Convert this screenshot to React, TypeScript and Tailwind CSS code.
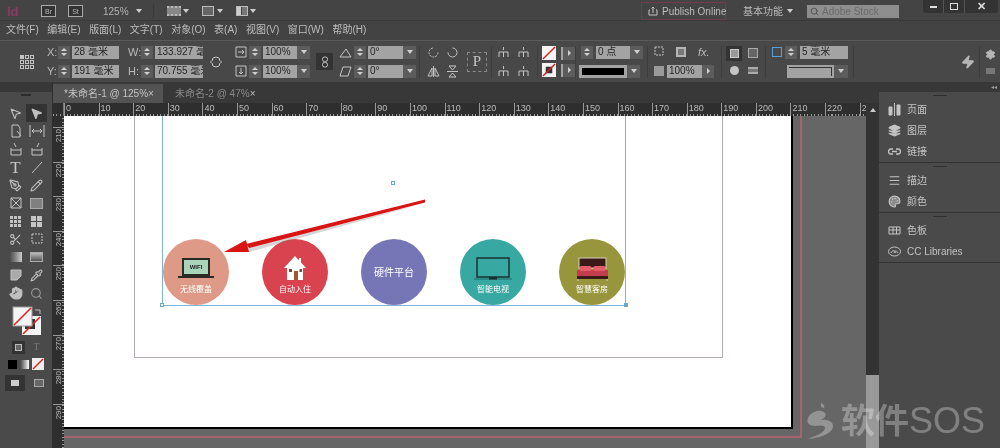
import type { ReactNode } from "react";
import { Hand, Layers, Menu, MousePointer2, Palette, Pencil, PenTool, Pipette, Scissors, Search, Settings, Zap } from "lucide-react";

const FONT = "[font-family:'Liberation_Sans','Noto_Sans_CJK_SC',sans-serif]";
const MENUS = ["文件(F)", "编辑(E)", "版面(L)", "文字(T)", "对象(O)", "表(A)", "视图(V)", "窗口(W)", "帮助(H)"];
const RULER_TOP = Array.from({ length: 24 }, (_, i) => i * 10);
const RULER_LEFT = [210, 220, 230, 240, 250, 260, 270, 280, 290];

function Svg({ w = 14, h = 14, box = "0 0 14 14", children }: { w?: number; h?: number; box?: string; children: ReactNode }) {
  return (
    <svg width={w} height={h} viewBox={box} fill="none" stroke="#c4c4c4" strokeWidth="1" className="shrink-0">
      {children}
    </svg>
  );
}

function Caret({ color = "#cfcfcf" }: { color?: string }) {
  return <span className="block h-0 w-0 shrink-0 border-x-[3px] border-t-[4px] border-x-transparent" style={{ borderTopColor: color }} />;
}

function Spin() {
  return (
    <div className="flex h-[13px] w-[12px] shrink-0 flex-col items-center justify-center gap-[2px] bg-[#5c5c5c]">
      <span className="h-0 w-0 border-x-[3px] border-b-[3px] border-x-transparent border-b-[#d0d0d0]" />
      <span className="h-0 w-0 border-x-[3px] border-t-[3px] border-x-transparent border-t-[#d0d0d0]" />
    </div>
  );
}

function Field({ value, w, drop, arrow }: { value: string; w: number; drop?: boolean; arrow?: boolean }) {
  return (
    <div className="flex h-[13px] shrink-0">
      <div className="flex items-center overflow-hidden whitespace-nowrap bg-[#a3a3a3] pl-[2px] text-[10px] leading-none text-[#262626]" style={{ width: w }}>
        {value}
      </div>
      {drop && (
        <div className="flex w-[13px] items-center justify-center bg-[#5c5c5c]">
          <Caret />
        </div>
      )}
      {arrow && (
        <div className="flex w-[12px] items-center justify-center bg-[#5c5c5c]">
          <span className="h-0 w-0 border-y-[3px] border-l-[3px] border-y-transparent border-l-[#d0d0d0]" />
        </div>
      )}
    </div>
  );
}

function Row({ children, gap = 2 }: { children: ReactNode; gap?: number }) {
  return (
    <div className="flex h-[13px] items-center" style={{ gap }}>
      {children}
    </div>
  );
}

function Section({ w, children, line = true }: { w: number; children: ReactNode; line?: boolean }) {
  return (
    <div className={`flex h-[32px] shrink-0 flex-col justify-between ${line ? "border-r border-[#3d3d3d]" : ""}`} style={{ width: w }}>
      {children}
    </div>
  );
}

function StrokeSwatch({ dark }: { dark?: boolean }) {
  return (
    <svg width="14" height="14" viewBox="0 0 15 15" className="shrink-0">
      <rect width="15" height="15" fill="#f4f4f4" />
      {dark && <rect x="4" y="4" width="7" height="7" fill="#333" />}
      <path d="M1 14 14 1" stroke="#d22" strokeWidth="1.6" />
    </svg>
  );
}

function ControlPanel() {
  return (
    <div className="flex h-[42px] shrink-0 items-center border-t border-[#5a5a5a] bg-[#484848] text-[11px] text-[#b9b9b9]">
      <div className="flex w-[47px] shrink-0 justify-end pr-[13px]">
        <div className="grid grid-cols-3 gap-[1px]">
          {Array.from({ length: 9 }, (_, i) => (
            <span key={i} className={`h-[4px] w-[4px] border border-[#c4c4c4] ${i === 0 ? "bg-[#c4c4c4]" : ""}`} />
          ))}
        </div>
      </div>
      <Section w={78} line={false}>
        <Row>
          <span className="w-[9px]">X:</span>
          <Spin />
          <Field value="28 毫米" w={47} />
        </Row>
        <Row>
          <span className="w-[9px]">Y:</span>
          <Spin />
          <Field value="191 毫米" w={47} />
        </Row>
      </Section>
      <Section w={79} line={false}>
        <Row>
          <span className="ml-[3px] w-[11px]">W:</span>
          <Spin />
          <Field value="133.927 毫米" w={48} />
        </Row>
        <Row>
          <span className="ml-[3px] w-[11px]">H:</span>
          <Spin />
          <Field value="70.755 毫米" w={48} />
        </Row>
      </Section>
      <div className="mr-[7px] flex w-[24px] shrink-0 justify-center">
        <Svg>
          <path d="M3 6a4 4 0 0 1 8 0M3 8a4 4 0 0 0 8 0M1 7h2M11 7h2" />
        </Svg>
      </div>
      <Section w={81} line={false}>
        <Row>
          <Svg w={12} h={12} box="0 0 12 12">
            <path d="M1 1h10v10H1zM3 6h6M7 4l2 2-2 2" />
          </Svg>
          <Spin />
          <Field value="100%" w={34} drop />
        </Row>
        <Row>
          <Svg w={12} h={12} box="0 0 12 12">
            <path d="M1 1h10v10H1zM6 3v6M4 7l2 2 2-2" />
          </Svg>
          <Spin />
          <Field value="100%" w={34} drop />
        </Row>
      </Section>
      <div className="mr-[6px] flex h-[17px] w-[17px] shrink-0 items-center justify-center bg-[#333]">
        <Svg w={8} h={12} box="0 0 8 12">
          <rect x="1.5" y="1" width="5" height="4.5" rx="2" />
          <rect x="1.5" y="6.5" width="5" height="4.5" rx="2" />
        </Svg>
      </div>
      <Section w={81}>
        <Row>
          <Svg w={13} h={13} box="0 0 13 13">
            <path d="M1 11h11L7 3z" />
          </Svg>
          <Spin />
          <Field value="0°" w={35} drop />
        </Row>
        <Row>
          <Svg w={13} h={13} box="0 0 13 13">
            <path d="M1 11h8l3-9H4z" />
          </Svg>
          <Spin />
          <Field value="0°" w={35} drop />
        </Row>
      </Section>
      <div className="flex h-[32px] w-[72px] shrink-0 items-center gap-[8px] border-r border-[#3d3d3d] pl-[7px]">
        <div className="grid grid-cols-2 gap-x-[6px] gap-y-[6px]">
          <Svg w={13} h={13} box="0 0 13 13">
            <path d="M11 6.5A4.5 4.5 0 1 1 6.5 2" strokeDasharray="2 1" />
          </Svg>
          <Svg w={13} h={13} box="0 0 13 13">
            <path d="M2 6.5A4.5 4.5 0 1 0 6.5 2" />
          </Svg>
          <Svg w={13} h={13} box="0 0 13 13">
            <path d="M6.5 1v11M5 3 1 11h4zM8 3l4 8H8z" />
          </Svg>
          <Svg w={13} h={13} box="0 0 13 13">
            <path d="M1 6.5h11M3 1h7L6.5 5zM3 12h7L6.5 8z" />
          </Svg>
        </div>
        <div className="flex h-[20px] w-[20px] items-center justify-center border border-dashed border-[#8a8a8a] font-['Liberation_Serif',serif] text-[15px] leading-none text-[#c4c4c4]">
          P
        </div>
      </div>
      <div className="grid h-[32px] w-[46px] shrink-0 grid-cols-[20px_20px] content-center gap-y-[6px] border-r border-[#3d3d3d] pl-[5px]">
        {[0, 1, 2, 3].map((k) => (
          <Svg key={k} w={13} h={13} box="0 0 13 13">
            <path d="M6.5 1v3M2 11V6h9v5M6.5 6v5" />
          </Svg>
        ))}
      </div>
      <Section w={38}>
        <div className="flex h-[15px] items-center gap-[5px] pl-[4px]">
          <StrokeSwatch />
          <Field value="" w={0} arrow />
        </div>
        <div className="flex h-[15px] items-center gap-[5px] pl-[4px]">
          <StrokeSwatch dark />
          <Field value="" w={0} arrow />
        </div>
      </Section>
      <Section w={72}>
        <Row gap={3}>
          <span className="w-[2px]" />
          <Spin />
          <Field value="0 点" w={34} drop />
        </Row>
        <div className="ml-[3px] flex h-[13px] w-[61px]">
          <div className="flex flex-1 items-center bg-[#a3a3a3] px-[3px]">
            <span className="h-[7px] w-full bg-black" />
          </div>
          <div className="flex w-[13px] items-center justify-center bg-[#5c5c5c]">
            <Caret />
          </div>
        </div>
      </Section>
      <Section w={74}>
        <div className="flex h-[13px] items-center gap-[10px] pl-[6px]">
          <Svg w={12} h={12} box="0 0 12 12">
            <path d="M1 1h8v8H1z" strokeDasharray="2 1" />
          </Svg>
          <span className="h-[10px] w-[10px] border-2 border-[#b5b5b5] bg-[#777]" />
          <span className="ml-[2px] text-[11px] italic leading-none">fx.</span>
        </div>
        <div className="flex items-center gap-[3px] pl-[6px]">
          <span className="h-[10px] w-[10px] bg-[#9a9a9a]" />
          <Field value="100%" w={35} arrow />
        </div>
      </Section>
      <div className="grid h-[32px] w-[44px] shrink-0 grid-cols-[19px_19px] content-center items-center gap-y-[2px] border-r border-[#3d3d3d] pl-[4px]">
        <span className="flex h-[15px] w-[16px] items-center justify-center bg-[#333]">
          <span className="h-[9px] w-[9px] border border-[#ccc] bg-[#999]" />
        </span>
        <span className="flex h-[15px] w-[16px] items-center justify-center">
          <span className="h-[10px] w-[10px] border border-[#aaa] bg-[#666] p-[2px]" />
        </span>
        <span className="flex h-[15px] w-[16px] items-center justify-center">
          <span className="h-[9px] w-[9px] rounded-full bg-[#c4c4c4]" />
        </span>
        <span className="flex h-[15px] w-[16px] items-center justify-center">
          <span className="h-[7px] w-[10px] border-y-2 border-[#aaa] bg-[#777]" />
        </span>
      </div>
      <Section w={88}>
        <Row gap={3}>
          <span className="ml-[6px] h-[10px] w-[10px] border border-[#5aa0d8]" />
          <Spin />
          <Field value="5 毫米" w={48} />
        </Row>
        <div className="ml-[21px] flex h-[13px]">
          <div className="flex w-[47px] items-center bg-[#a3a3a3] px-[2px]">
            <span className="h-[9px] w-full border-t border-r border-[#333]" />
          </div>
          <div className="flex w-[14px] items-center justify-center bg-[#5c5c5c]">
            <Caret />
          </div>
        </div>
      </Section>
      <div className="flex flex-1 justify-end pr-[4px]">
        <Zap size={14} color="#b5b5b5" fill="#b5b5b5" />
      </div>
      <div className="flex h-[32px] w-[21px] shrink-0 flex-col items-center justify-around border-l border-[#3d3d3d]">
        <Settings size={11} color="#b5b5b5" fill="#b5b5b5" />
        <span className="h-[6px] w-[9px] bg-[#777]" />
      </div>
    </div>
  );
}

function ToolPair({ children, on }: { children: ReactNode; on?: boolean }) {
  return (
    <div className={`flex h-[18px] items-center justify-center ${on ? "bg-[#333]" : ""}`}>
      {children}
    </div>
  );
}

function ToolPanel() {
  const c = "#c0c0c0";
  return (
    <aside className="flex w-[53px] shrink-0 flex-col border-r border-[#2e2e2e] bg-[#4a4a4a]">
      <div className="flex h-[10px] items-center justify-center bg-[#383838] text-[7px] leading-none text-[#999]" />
      <div className="mx-auto mt-[2px] h-[2px] w-[10px] bg-[#2d2d2d]" />
      <div className="mt-[8px] grid grid-cols-2 px-[5px]">
        <ToolPair>
          <MousePointer2 size={13} color={c} />
        </ToolPair>
        <ToolPair on>
          <MousePointer2 size={13} color={c} fill={c} />
        </ToolPair>
        <ToolPair>
          <Svg>
            <path d="M3 1h6l2 3v9H3zM8 7l4 5" />
          </Svg>
        </ToolPair>
        <ToolPair>
          <Svg w={16} h={12} box="0 0 16 12">
            <path d="M1 0v12M15 0v12M3 6h10M5 4 3 6l2 2M11 4l2 2-2 2" />
          </Svg>
        </ToolPair>
        <ToolPair>
          <Svg>
            <path d="M2 6v7h10V6M2 8h10M5 1l2 4" />
          </Svg>
        </ToolPair>
        <ToolPair>
          <Svg>
            <path d="M2 6v7h10V6M2 8h10M9 1 7 5" />
          </Svg>
        </ToolPair>
        <ToolPair>
          <span className="font-['Liberation_Serif',serif] text-[17px] leading-none text-[#c8c8c8]">T</span>
        </ToolPair>
        <ToolPair>
          <Svg>
            <path d="m2 13 10-11" />
          </Svg>
        </ToolPair>
        <ToolPair>
          <PenTool size={13} color={c} />
        </ToolPair>
        <ToolPair>
          <Pencil size={13} color={c} />
        </ToolPair>
        <ToolPair>
          <Svg>
            <path d="M2 2h10v10H2zM2 2l10 10M12 2 2 12" />
          </Svg>
        </ToolPair>
        <ToolPair>
          <span className="h-[11px] w-[13px] border border-[#aaa] bg-[#808080]" />
        </ToolPair>
        <ToolPair>
          <div className="grid grid-cols-3 gap-[1px]">
            {Array.from({ length: 9 }, (_, i) => (
              <span key={i} className="h-[3px] w-[3px] bg-[#c4c4c4]" />
            ))}
          </div>
        </ToolPair>
        <ToolPair>
          <div className="grid grid-cols-2 gap-[1px]">
            {Array.from({ length: 4 }, (_, i) => (
              <span key={i} className="h-[5px] w-[5px] bg-[#c4c4c4]" />
            ))}
          </div>
        </ToolPair>
        <ToolPair>
          <Scissors size={13} color={c} />
        </ToolPair>
        <ToolPair>
          <Svg>
            <path d="M2 2h10v9H2z" strokeDasharray="2 1" />
          </Svg>
        </ToolPair>
        <ToolPair>
          <span className="h-[10px] w-[13px] bg-gradient-to-r from-[#444] to-[#ccc]" />
        </ToolPair>
        <ToolPair>
          <span className="h-[10px] w-[13px] border border-[#aaa] bg-gradient-to-b from-[#bbb] to-[#555]" />
        </ToolPair>
        <ToolPair>
          <Svg>
            <path d="M2 2h10v6l-4 4H2z" fill="#aaa" />
          </Svg>
        </ToolPair>
        <ToolPair>
          <Pipette size={13} color={c} />
        </ToolPair>
        <ToolPair>
          <Hand size={14} color={c} fill={c} />
        </ToolPair>
        <ToolPair>
          <Search size={13} color="#9a9a9a" />
        </ToolPair>
      </div>
      <div className="mt-[4px] flex h-[30px] pl-[12px]">
        <svg width="32" height="30" viewBox="0 0 32 30" className="shrink-0">
          <rect x="10" y="10" width="19" height="19" fill="#f4f4f4" />
          <rect x="13" y="13" width="10" height="10" fill="#333" />
          <path d="M11 28 28 11" stroke="#d22" strokeWidth="1.6" />
          <rect x="1" y="1" width="19" height="19" fill="#f4f4f4" stroke="#999" />
          <path d="M2 19 19 2" stroke="#d22" strokeWidth="1.6" />
          <path d="M23 4h5v4" stroke="#bbb" fill="none" />
        </svg>
      </div>
      <div className="mt-[4px] flex h-[14px] items-center justify-center gap-[8px]">
        <span className="flex h-[13px] w-[13px] items-center justify-center bg-[#333]">
          <span className="h-[7px] w-[7px] border border-[#bbb] bg-[#666]" />
        </span>
        <span className="font-['Liberation_Serif',serif] text-[10px] leading-none text-[#777]">T</span>
      </div>
      <div className="mt-[3px] flex h-[14px] items-center justify-center gap-[3px]">
        <span className="h-[9px] w-[9px] bg-black" />
        <span className="h-[9px] w-[9px] bg-gradient-to-r from-[#444] to-white" />
        <svg width="12" height="12" viewBox="0 0 12 12" className="shrink-0">
          <rect width="12" height="12" fill="#eee" />
          <path d="M1 11 11 1" stroke="#d22" strokeWidth="1.5" />
        </svg>
      </div>
      <div className="mt-[4px] flex h-[16px] items-center justify-between px-[5px]">
        <span className="flex h-[16px] w-[20px] items-center justify-center bg-[#333]">
          <span className="h-[6px] w-[8px] bg-[#ccc]" />
        </span>
        <span className="mr-[3px] h-[8px] w-[10px] border border-[#aaa] bg-[#666]" />
      </div>
    </aside>
  );
}

function Circle({ color, label, icon }: { color: string; label: string; icon: ReactNode }) {
  return (
    <div className="flex h-[66px] w-[66px] flex-col items-center justify-end rounded-full pb-[10px]" style={{ backgroundColor: color }}>
      {icon}
      <span className="mt-[4px] text-[8px] leading-[10px] text-white">{label}</span>
    </div>
  );
}

function Canvas() {
  return (
    <div className="relative flex-1 overflow-hidden bg-[#666]">
      {/* page */}
      <div className="h-[313px] w-[729px] border-r-2 border-b-2 border-black bg-white" />
      {/* bleed */}
      <div className="absolute left-0 top-[-10px] h-[332px] w-[738px] border-r-2 border-b-2 border-[#a8646e]" />
      {/* margins */}
      <div className="absolute left-[70px] top-[-10px] h-[252px] w-[589px] border-x border-b border-[#b3acb3]" />
      {/* text frame */}
      <div className="absolute left-[98px] top-[-10px] flex h-[200px] w-[464px] items-end justify-between border-x border-b border-[#7fb4d6] px-0 pb-0">
        <Circle
          color="#de9a86"
          label="无线覆盖"
          icon={
            <div className="mb-[3px] flex w-[36px] flex-col items-center">
              <div className="flex h-[18px] w-[28px] items-center justify-center border-2 border-[#2b2b26] bg-[#a9d4ba] text-[6px] font-bold leading-none text-[#222]">WIFI</div>
              <div className="h-[2px] w-[36px] bg-[#2b2b26]" />
            </div>
          }
        />
        <Circle
          color="#d9434f"
          label="自动入住"
          icon={
            <svg width="24" height="26" viewBox="0 0 24 26" className="shrink-0">
              <path d="M12 1 1 13h3v12h16V13h3L18 7.5V3h-2v2.5z" fill="#fff" />
              <rect x="11" y="16" width="4" height="9" fill="#a5562e" />
              <rect x="6" y="14" width="3" height="3" fill="#7a4a30" />
              <rect x="16.5" y="14" width="2.5" height="3" fill="#7a4a30" />
            </svg>
          }
        />
        <div className="flex h-[66px] w-[66px] items-center justify-center rounded-full bg-[#7676b6] text-[10px] text-white">硬件平台</div>
        <Circle
          color="#38a8a2"
          label="智能电视"
          icon={
            <svg width="38" height="24" viewBox="0 0 38 24" className="shrink-0">
              <rect x="3" y="1" width="32" height="19" fill="none" stroke="#17302f" strokeWidth="1.5" />
              <path d="M0 22h38" stroke="#1d6f6b" />
              <rect x="15" y="20" width="8" height="2.5" fill="#17302f" />
            </svg>
          }
        />
        <Circle
          color="#98963c"
          label="智慧客房"
          icon={
            <svg width="33" height="24" viewBox="0 0 33 24" className="shrink-0">
              <rect x="3" y="1" width="27" height="10" fill="#3a1a14" stroke="#d8cfc0" />
              <rect x="1" y="13" width="31" height="6" fill="#c43d4c" />
              <rect x="4" y="9" width="11" height="5" rx="1" fill="#e35d6a" />
              <rect x="18" y="9" width="11" height="5" rx="1" fill="#e35d6a" />
              <rect x="1" y="19" width="31" height="3" fill="#3a1a14" />
              <path d="M2 22v2M31 22v2" stroke="#d8cfc0" />
            </svg>
          }
        />
      </div>
      {/* handles */}
      <span className="absolute left-[96px] top-[187px] h-[4px] w-[4px] border border-[#6ca6cc] bg-white" />
      <span className="absolute left-[560px] top-[187px] h-[4px] w-[4px] border border-[#6ca6cc] bg-[#6ca6cc]" />
      <span className="absolute left-[327px] top-[65px] h-[4px] w-[4px] border border-[#6ca6cc] bg-white" />
      {/* red arrow */}
      <svg width="220" height="70" viewBox="0 0 220 70" className="absolute left-[155px] top-[80px]">
        <path d="M206 5 30 54 28 50z" fill="#777" fillOpacity="0.3" transform="translate(0 2)" />
        <path d="M206 3.500 206 6.500 30 52 27 48z" fill="#d81515" />
        <path d="M5 56 27 44 30 56z" fill="#d81515" />
      </svg>
    </div>
  );
}

function RightPanel() {
  const item = "flex h-[21px] items-center gap-[6px] pl-[9px] text-[10px] text-[#c4c4c4]";
  const handle = <div className="mx-auto mt-[3px] h-[2px] w-[14px] bg-[#2f2f2f]" />;
  return (
    <aside className="flex w-[121px] shrink-0 flex-col bg-[#4a4a4a]">
      <div className="flex h-[10px] items-center justify-end bg-[#383838] pr-[3px] text-[6px] leading-none text-[#9a9a9a]">◂◂</div>
      <div className="flex h-[71px] shrink-0 flex-col border-b border-[#333]">
        {handle}
        <div className="mt-[3px] flex flex-col">
          <div className={item}>
            <Svg w={13} h={13} box="0 0 13 13">
              <path d="M6.5 0v13M1 4h3v8H1zM9 2h3v10H9z" fill="#c4c4c4" />
            </Svg>
            <span>页面</span>
          </div>
          <div className={item}>
            <Layers size={13} color="#c4c4c4" fill="#c4c4c4" />
            <span>图层</span>
          </div>
          <div className={item}>
            <Svg w={13} h={13} box="0 0 13 13">
              <path d="M5 4H3a2.5 2.5 0 0 0 0 5h2M8 4h2a2.5 2.5 0 0 1 0 5H8M4 6.5h5" strokeWidth="1.3" />
            </Svg>
            <span>链接</span>
          </div>
        </div>
      </div>
      <div className="flex h-[50px] shrink-0 flex-col border-b border-[#333]">
        {handle}
        <div className="mt-[3px] flex flex-col">
          <div className={item}>
            <Menu size={13} color="#c4c4c4" />
            <span>描边</span>
          </div>
          <div className={item}>
            <Palette size={13} color="#c4c4c4" fill="#8a8a8a" />
            <span>颜色</span>
          </div>
        </div>
      </div>
      <div className="flex h-[50px] shrink-0 flex-col border-b border-[#333]">
        {handle}
        <div className="mt-[3px] flex flex-col">
          <div className={item}>
            <Svg w={13} h={13} box="0 0 13 13">
              <path d="M1 3h11v7H1zM1 6h11M5 3v7M8.5 3v7" />
            </Svg>
            <span>色板</span>
          </div>
          <div className={item}>
            <Svg w={13} h={13} box="0 0 13 13">
              <ellipse cx="6.5" cy="6.5" rx="6" ry="4.5" />
              <path d="M3 8c1-3 4-3 5 0M6 8c1-3 3-2 4 0" />
            </Svg>
            <span>CC Libraries</span>
          </div>
        </div>
      </div>
    </aside>
  );
}

export default function App() {
  return (
    <div className={`relative flex h-[448px] w-[1000px] flex-col overflow-hidden bg-[#484848] blur-[0.3px] ${FONT}`}>
      {/* title bar */}
      <header className="flex h-[20px] shrink-0 items-center bg-[#444] pt-[2px] pr-[2px] text-[10px] text-[#b4b4b4]">
        <span className="ml-[7px] w-[34px] text-[13px] font-bold leading-none text-[#8b3a62]">Id</span>
        <span className="flex h-[12px] w-[15px] items-center justify-center border border-[#aaa] bg-[#333] text-[7px] leading-none">Br</span>
        <span className="ml-[12px] flex h-[12px] w-[15px] items-center justify-center border border-[#aaa] bg-[#333] text-[7px] leading-none">St</span>
        <span className="ml-[20px] text-[10px]">125%</span>
        <span className="ml-[7px]">
          <Caret />
        </span>
        <span className="ml-[11px] h-[14px] w-px bg-[#383838]" />
        <div className="ml-[13px] flex items-center gap-[2px]">
          <span className="h-[10px] w-[14px] border-y-2 border-dotted border-[#bbb] bg-[#888]" />
          <Caret />
        </div>
        <div className="ml-[13px] flex items-center gap-[3px]">
          <span className="h-[10px] w-[12px] border border-[#bbb] bg-[#666]" />
          <Caret />
        </div>
        <div className="ml-[13px] flex items-center gap-[2px]">
          <span className="grid h-[10px] w-[12px] grid-cols-2 gap-px border border-[#bbb]">
            <span className="bg-[#ccc]" />
            <span className="bg-[#777]" />
          </span>
          <Caret />
        </div>
        <div className="ml-auto flex h-[18px] w-[85px] items-center gap-[4px] border border-[#6e3d50] pl-[6px] text-[10px]">
          <Svg w={10} h={10} box="0 0 10 10">
            <path d="M2 4H1v5h8V4H8M5 7V1M3.500 2.500 5 1l1.500 1.500" />
          </Svg>
          <span className="whitespace-nowrap text-[#bdbdbd]">Publish Online</span>
        </div>
        <span className="ml-[17px] whitespace-nowrap text-[#bdbdbd]">基本功能</span>
        <span className="ml-[4px]">
          <Caret />
        </span>
        <div className="ml-[14px] flex h-[13px] w-[92px] items-center gap-[3px] bg-[#8e8e8e] pl-[3px] text-[#6a6a6a]">
          <Search size={9} color="#444" />
          <span className="whitespace-nowrap">Adobe Stock</span>
        </div>
        <div className="ml-[24px] -mt-[2px] flex h-[13px] w-[75px] self-start overflow-hidden rounded-b-[2px] bg-[#333] text-white">
          <span className="flex w-[21px] items-center justify-center border-r border-[#555]">
            <span className="h-[2px] w-[7px] bg-[#ddd]" />
          </span>
          <span className="flex w-[21px] items-center justify-center border-r border-[#555]">
            <span className="h-[7px] w-[8px] border border-[#ddd]" />
          </span>
          <span className="flex flex-1 items-center justify-center text-[11px] font-bold leading-none text-[#ddd]">✕</span>
        </div>
      </header>

      {/* menu bar */}
      <nav className="flex h-[20px] shrink-0 items-center gap-[8.500px] border-t border-[#3a3a3a] bg-[#434343] pb-[2px] pl-[6px] text-[10px] text-[#bdbdbd]">
        {MENUS.map((m) => (
          <span key={m} className="whitespace-nowrap">
            {m}
          </span>
        ))}
      </nav>

      <ControlPanel />

      <div className="flex min-h-0 flex-1">
        <ToolPanel />
        <main className="flex min-w-0 flex-1 flex-col bg-[#383838]">
          {/* tabs */}
          <div className="flex h-[21px] shrink-0 items-end bg-[#383838] text-[10px]">
            <div className="flex h-[19px] w-[110px] items-center justify-between bg-[#535353] pl-[11px] pr-[10px] text-[#c4c4c4]">
              <span className="whitespace-nowrap">*未命名-1 @ 125%</span>
              <span>×</span>
            </div>
            <div className="flex h-[19px] w-[100px] items-center justify-between pl-[12px] pr-[9px] text-[#8a8a8a]">
              <span className="whitespace-nowrap">未命名-2 @ 47%</span>
              <span className="text-[#bbb]">×</span>
            </div>
          </div>
          <div className="flex min-h-0 flex-1">
            <div className="flex min-w-0 flex-1 flex-col">
              {/* top ruler */}
              <div className="flex h-[13px] shrink-0 overflow-hidden bg-[#2e2e2e] bg-[repeating-linear-gradient(90deg,#999_0,#999_1px,transparent_1px,transparent_3.460px)] bg-[length:100%_2px] bg-bottom bg-no-repeat">
                <div className="w-[11px] shrink-0 border-r border-[#777]" />
                {RULER_TOP.map((n) => (
                  <div key={n} className="h-[13px] w-[34.6px] shrink-0 border-l border-[#999] pl-[1px] text-[9px] leading-[11px] text-[#bdbdbd]">
                    {n}
                  </div>
                ))}
              </div>
              <div className="flex min-h-0 flex-1">
                {/* left ruler */}
                <div className="w-[11px] shrink-0 overflow-hidden bg-[#2e2e2e] bg-[repeating-linear-gradient(0deg,#999_0,#999_1px,transparent_1px,transparent_3.460px)] bg-[length:2px_100%] bg-right bg-no-repeat pt-[11px]">
                  {RULER_LEFT.map((n) => (
                    <div key={n} className="flex h-[34.6px] items-start justify-center border-t border-[#999] pt-[1px] text-[8px] leading-[10px] text-[#bdbdbd]">
                      <span className="rotate-180 [writing-mode:vertical-rl]">{n}</span>
                    </div>
                  ))}
                </div>
                <Canvas />
              </div>
            </div>
            {/* scrollbar */}
            <div className="flex w-[13px] shrink-0 flex-col bg-[#333]">
              <div className="flex h-[13px] shrink-0 items-center justify-center">
                <span className="h-0 w-0 border-x-[3px] border-b-[4px] border-x-transparent border-b-[#ccc]" />
              </div>
              <div className="flex-1" />
              <div className="h-[73px] shrink-0 bg-[#999]" />
            </div>
          </div>
        </main>
        <RightPanel />
      </div>

      {/* watermark */}
      <div className="absolute left-[805px] top-[402px] flex items-center gap-[6px] text-white/30">
        <svg width="30" height="38" viewBox="0 0 30 38" className="shrink-0" fill="currentColor">
          <path d="M16 1c3 1 4 3 3 5l-3-1zM4 14c4-5 12-7 16-3 2 3-1 6-6 7 6-1 14 0 14 6 0 7-12 12-26 13 10-3 18-7 18-11 0-3-5-3-10-2C4 24 0 20 4 14z" />
        </svg>
        <span className="whitespace-nowrap text-[34px] font-bold leading-none">
          软件<span className="font-normal text-[36px]">SOS</span>
        </span>
      </div>
    </div>
  );
}
